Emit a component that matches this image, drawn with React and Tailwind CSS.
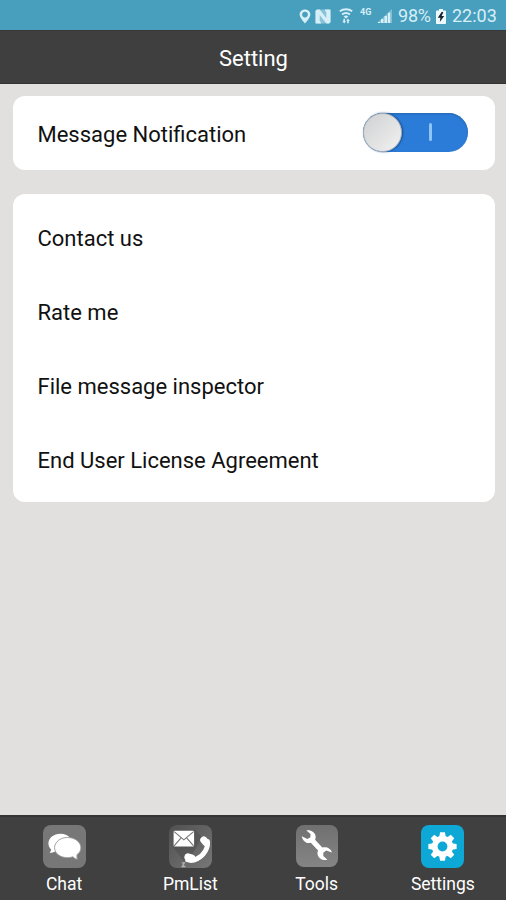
import React, { useState } from 'react';

const StatusBar = () => (
  <div className="flex h-[30px] items-center justify-end bg-[#489ebd] pr-[9px] pt-[2px] text-[#d6eff8]">
    <svg className="mr-[4px] h-[15px] w-[12px]" viewBox="0 0 12 15">
      <path
        fill="currentColor"
        fillRule="evenodd"
        d="M6 0.5C2.9 0.5 0.6 2.8 0.6 5.6C0.6 9 6 14.6 6 14.6S11.4 9 11.4 5.6C11.4 2.8 9.1 0.5 6 0.5ZM6 2.8A2.8 2.8 0 1 1 6 8.4A2.8 2.8 0 0 1 6 2.8Z"
      />
    </svg>
    <svg className="mr-[8px] h-[15px] w-[16px]" viewBox="0 0 16 15">
      <rect x="0.5" y="0.5" width="15" height="14" rx="2" fill="currentColor" opacity="0.45" />
      <path
        fill="currentColor"
        d="M0.5 14.2V2.5C0.5 1.2 1.3 0.5 2.5 0.5H4.6L11.3 9V3.2L10 1.5V0.5H15.5V12.3C15.5 13.8 14.7 14.5 13.5 14.5H11.4L4.7 6V12L6 13.4V14.5H0.5Z"
      />
    </svg>
    <svg className="mr-[7px] h-[16px] w-[14px]" viewBox="0 0 14 16">
      <g fill="none" stroke="currentColor" strokeWidth="2">
        <path d="M0.8 3.3C4.4 0.6 9.6 0.6 13.2 3.3" />
        <path d="M3 6.5C5.4 4.7 8.6 4.7 11 6.5" />
      </g>
      <path fill="currentColor" d="M4.6 8.3C6 7.2 8 7.2 9.4 8.3L7 10.8Z" />
      <path fill="currentColor" d="M3.4 13H4.4V10.8H6V13H7L5.2 15.6ZM7.2 13L9 10.5L10.8 13H9.8V15.3H8.2V13Z" />
    </svg>
    <span className="mr-[5px] w-[12px] pb-[7px] text-[9px] font-bold leading-none">4G</span>
    <svg className="mr-[6px] h-[14px] w-[15px]" viewBox="0 0 15 14">
      <path fill="currentColor" opacity="0.4" d="M0 14L15 0V14Z" />
      <path fill="currentColor" d="M1 13H3V14H1ZM4 10H6.4V14H4ZM7.5 7H10V14H7.5ZM11 3.8H13.2V14H11Z" />
    </svg>
    <span className="mr-[5px] w-[33px] whitespace-nowrap text-[18px] leading-none tracking-[-0.2px]">98%</span>
    <svg className="mr-[6px] h-[15px] w-[10px]" viewBox="0 0 10 15">
      <path fill="#eef9fd" d="M3 0H7V1.6H9.2Q10 1.6 10 2.4V14.2Q10 15 9.2 15H0.8Q0 15 0 14.2V2.4Q0 1.6 0.8 1.6H3Z" />
      <path fill="#15242b" d="M5.6 3L1.8 8.8H4.4L3.8 13L8.2 7H5.6L7.4 3Z" />
    </svg>
    <span className="w-[45px] whitespace-nowrap text-[18px] leading-none">22:03</span>
  </div>
);

const Toggle = ({ on, onClick }) => (
  <button
    type="button"
    role="switch"
    aria-checked={on}
    aria-label="Message Notification"
    onClick={onClick}
    className="mb-[2px] flex h-[39px] w-[105px] items-center rounded-full bg-[#2b7bd9] shadow-[inset_0_1px_2px_#2568ad]"
  >
    <span className="h-[39px] w-[39px] rounded-full border border-[#b4b6b9] bg-gradient-to-br from-[#cfd0d1] to-[#f2f2f2] shadow-[1px_0_2px_#174d86]" />
    <span className="ml-[27px] h-[18px] w-[3px] rounded-sm bg-[#8fc5f5]" />
  </button>
);

const ChatIcon = () => (
  <svg className="h-full w-full" viewBox="0 0 42 42">
    <path
      fill="#fff"
      d="M17 8.5C10.5 8.5 5.3 12.7 5.3 18C5.3 20.3 6.3 22.4 8 24C7.8 25.4 7.2 26.4 6.4 27.2C8.5 27.3 10.3 26.8 11.8 25.9L20 26L27 13C25 10.3 21.2 8.5 17 8.5Z"
    />
    <path
      fill="#fff"
      stroke="#999"
      strokeWidth="0.9"
      d="M24 12.2C16.9 12.2 11.3 16.6 11.3 22.2C11.3 27.8 16.9 31.9 24 31.9C25.8 31.9 27.7 31.6 29.2 31C30.5 32.3 31.8 33.2 33.5 33.5C33.1 32.2 33 30.5 33.3 28.8C35.7 27.2 37 24.8 37 22.2C37 16.6 31.2 12.2 24 12.2Z"
    />
  </svg>
);

const PmListIcon = () => (
  <svg className="h-full w-full" viewBox="0 0 42 42">
    <path fill="#494949" d="M3 20L25 4L32 12L22 30L14 35Z" opacity="0.5" />
    <rect x="4.5" y="5.6" width="20" height="15.4" rx="1" fill="#fff" />
    <path fill="none" stroke="#777" strokeWidth="1.1" d="M5 6.5L14.5 14.5L24 6.5M5 20.5L11.8 12.5M24 20.5L17.2 12.5" />
    <path
      fill="none"
      stroke="#fff"
      strokeWidth="4.8"
      strokeLinecap="round"
      d="M37.5 16C38.7 21.5 34.5 29.5 27.5 33C23.8 34.8 20.8 35 18.3 34"
    />
    <path stroke="#fff" strokeWidth="7" strokeLinecap="round" d="M34 14.6L36.3 17.4M18.5 31.2L22 32.2" />
    <path fill="none" stroke="#b4b4b4" strokeWidth="1.3" d="M12.5 37H15L13 40.5H16" />
  </svg>
);

const WrenchIcon = () => (
  <svg className="h-full w-full" viewBox="0 0 42 42">
    <path
      fill="#fff"
      d="M5.8 11.2L11.4 14.1L14.4 12.2L14.5 8.9L10.4 5.4C14.6 4.4 19 7.1 19.6 11C19.8 12.5 19.6 13.7 19.1 14.7L26.3 22.6C30.4 21.4 34.8 23.4 36.1 27.6L30.2 25.6L27.3 27.7L27.3 31L31.4 34.7C27.2 36 22.5 33.6 21.6 29.5C21.3 28 21.5 26.6 22.1 25.4L14.8 17.8C11 19 6.4 16.2 5.8 11.2Z"
    />
  </svg>
);

const GearIcon = () => (
  <svg className="h-full w-full" viewBox="0 0 42 42">
    <g fill="#fff">
      <circle cx="21" cy="21" r="10.4" />
      {[0, 45, 90, 135, 180, 225, 270, 315].map((angle) => (
        <path key={angle} d="M17.8 12L18.6 7.2H23.4L24.2 12Z" transform={`rotate(${angle} 21 21)`} />
      ))}
    </g>
    <circle cx="21" cy="21" r="4.8" fill="#0ea8d7" />
  </svg>
);

const tabs = [
  { label: 'Chat', Icon: ChatIcon, tile: 'h-[43px] w-[43px] bg-[#777]' },
  { label: 'PmList', Icon: PmListIcon, tile: 'h-[43px] w-[43px] bg-gradient-to-br from-[#505050] to-[#777]' },
  { label: 'Tools', Icon: WrenchIcon, tile: 'mb-px h-[42px] w-[42px] bg-gradient-to-b from-[#707070] to-[#858585]' },
  { label: 'Settings', Icon: GearIcon, tile: 'h-[43px] w-[43px] bg-[#0ea8d7]' },
];

const rows = ['Contact us', 'Rate me', 'File message inspector', 'End User License Agreement'];

const App = () => {
  const [notify, setNotify] = useState(true);

  return (
    <div className="flex h-[900px] w-[506px] flex-col overflow-hidden bg-[#e1e0de] font-['Roboto',sans-serif]">
      <StatusBar />
      <header className="flex h-[54px] items-center justify-center border-y border-t-[#373737] border-b-[#333] bg-[#3f3f3f] pl-px pt-[2px] text-[22px] text-white">
        Setting
      </header>

      <main className="flex flex-1 flex-col gap-6 pl-[12.5px] pr-[11.5px] pt-3 text-[22px] text-[#111]">
        <section className="flex h-[74px] items-center justify-between rounded-xl bg-white pl-[25px] pr-[27px]">
          <span className="pt-[2px]">Message Notification</span>
          <Toggle on={notify} onClick={() => setNotify(!notify)} />
        </section>
        <section className="h-[308px] rounded-xl bg-white px-[25px] pt-[7px]">
          {rows.map((row) => (
            <div key={row} className="flex h-[74px] items-center">
              {row}
            </div>
          ))}
        </section>
      </main>

      <nav className="grid h-[85px] grid-cols-4 border-t-2 border-[#343434] bg-[#404040] pl-px">
        {tabs.map(({ label, Icon, tile }) => (
          <div key={label} className="flex flex-col items-center pt-[7.5px]">
            <div className={`overflow-hidden rounded-lg ${tile}`}>
              <Icon />
            </div>
            <span className="mt-[4.5px] text-[17.5px] leading-[24px] text-white">{label}</span>
          </div>
        ))}
      </nav>
    </div>
  );
};

export default App;
